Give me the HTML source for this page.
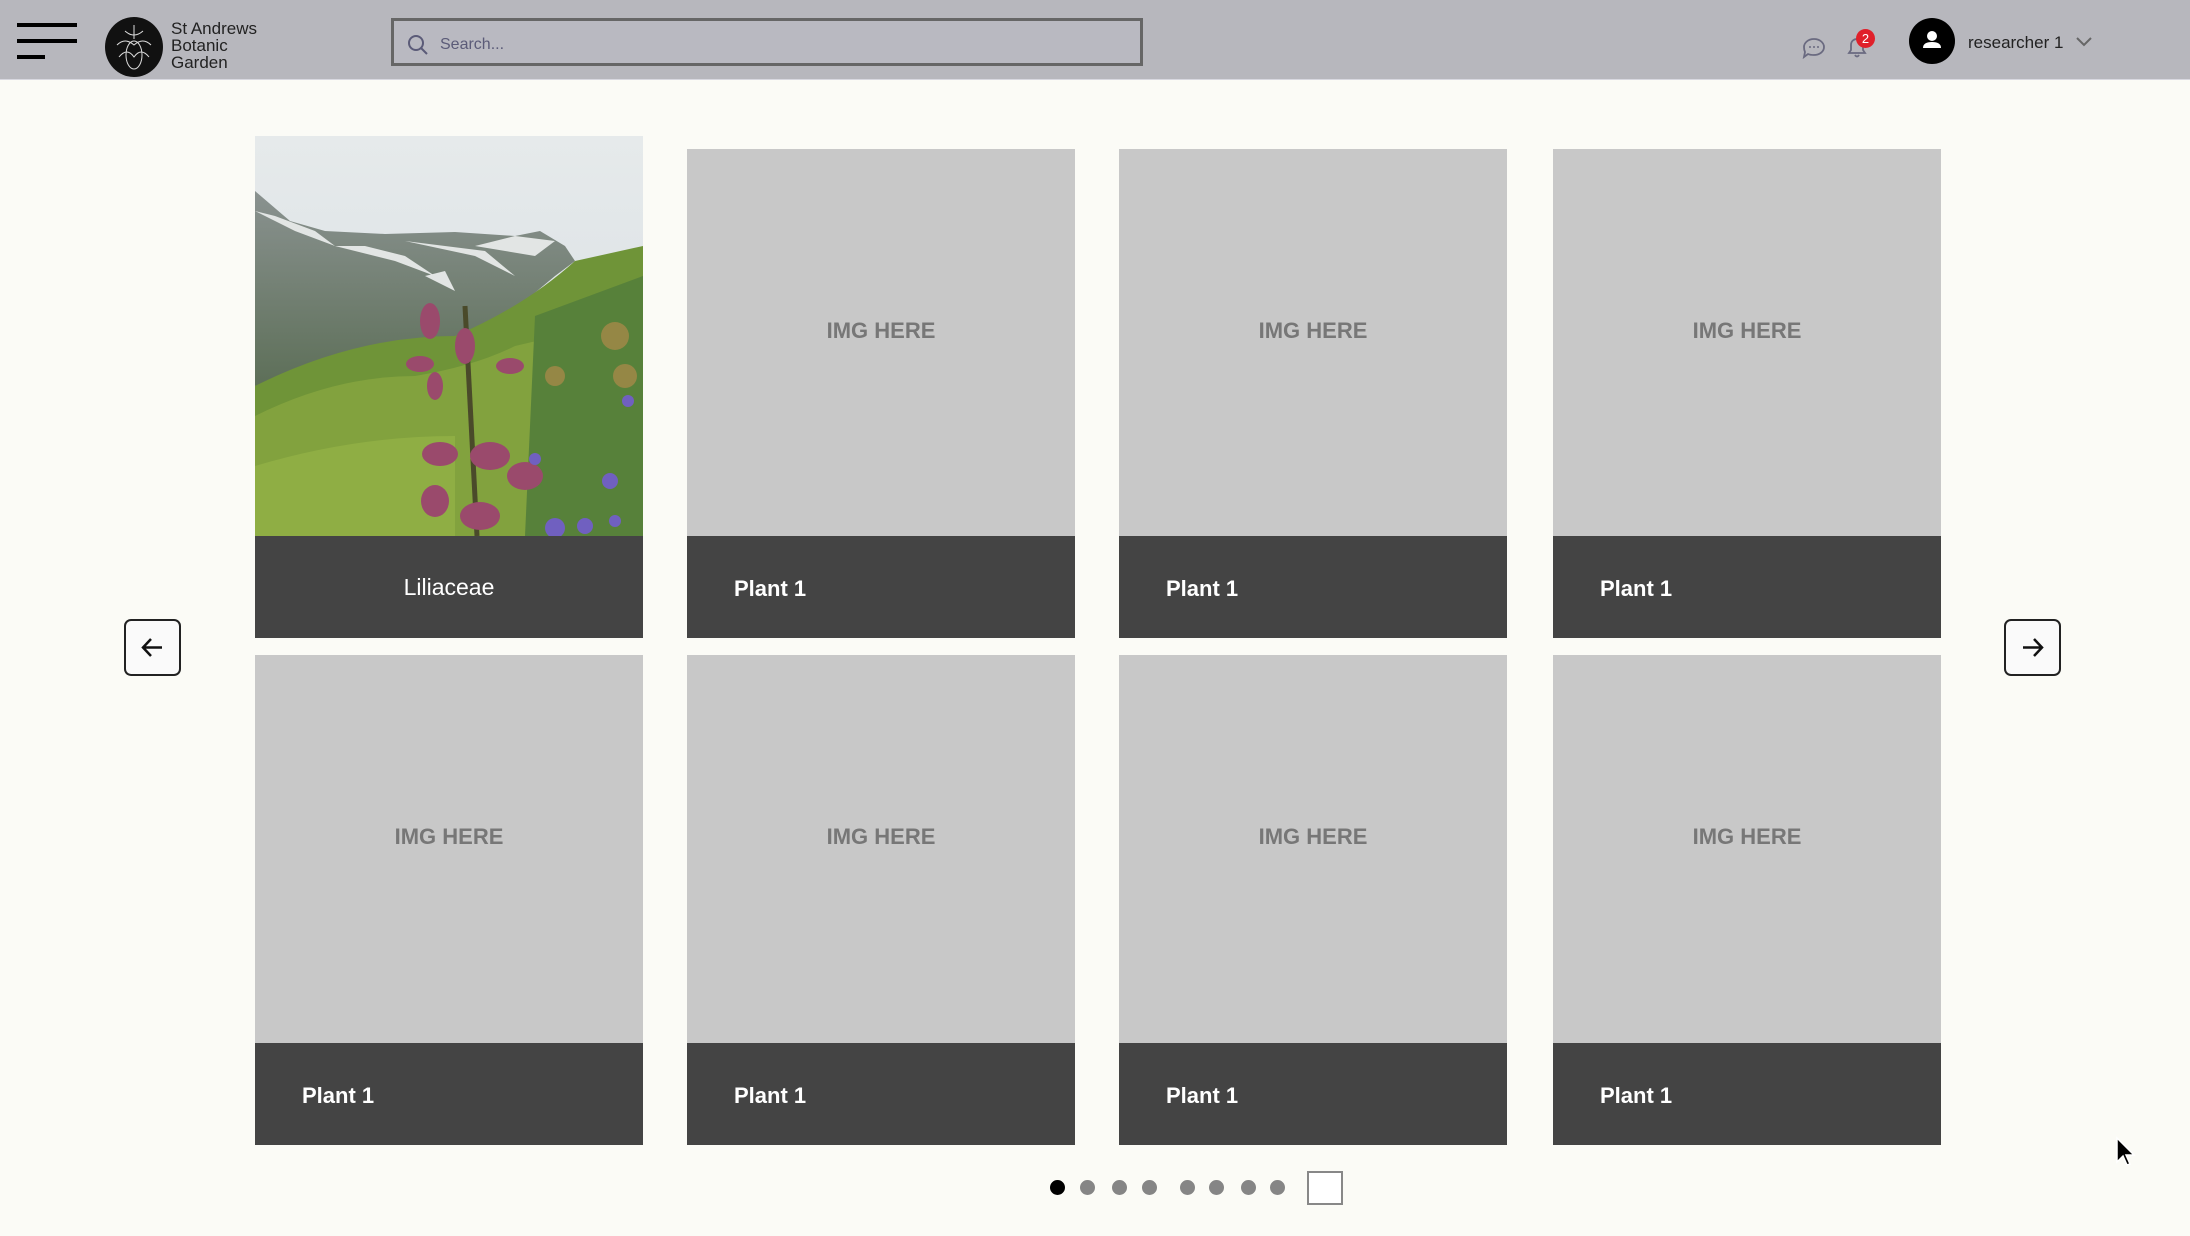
<!DOCTYPE html>
<html><head><meta charset="utf-8"><style>
*{margin:0;padding:0;box-sizing:border-box}
body{width:2190px;height:1236px;background:#fbfbf6;font-family:"Liberation Sans",sans-serif;position:relative;overflow:hidden}
.hdr{position:absolute;left:0;top:0;width:2190px;height:80px;background:#b7b7bd;border-bottom:1px solid #d8d8e0}
.ham{position:absolute;left:17px;height:4px;background:#000}
.logo{position:absolute;left:105px;top:17px;width:58px;height:60px;border-radius:50%;background:#111}
.ltxt{position:absolute;left:171px;top:20px;font-size:17px;line-height:17px;color:#222}
.search{position:absolute;left:391px;top:18px;width:752px;height:48px;border:3px solid #666;background:#b9b9c1}
.search span{position:absolute;left:46px;top:15px;font-size:16px;color:#5b5b78}
.card{position:absolute;width:388px;background:#c8c8c8}
.card .img{position:absolute;left:0;top:0;width:100%;text-align:center;font-weight:bold;font-size:22px;color:#777}
.bar{position:absolute;left:0;right:0;bottom:0;height:102px;background:#444}
.bar span{position:absolute;left:47px;top:40px;font-weight:bold;font-size:22px;color:#fff}
.arr{position:absolute;top:619px;width:57px;height:57px;border:2px solid #222;border-radius:7px;background:#fafafa}
.dot{position:absolute;top:1180px;width:15px;height:15px;border-radius:50%;background:#858585}
</style></head><body>
<div class="hdr">
<div class="ham" style="top:23px;width:60px"></div>
<div class="ham" style="top:39px;width:60px"></div>
<div class="ham" style="top:55px;width:28px"></div>
<div class="logo"><svg width="58" height="60" viewBox="0 0 58 60"><g fill="none" stroke="#ddd" stroke-width="1"><ellipse cx="29" cy="38" rx="8" ry="14"/><path d="M12 28 Q20 20 29 28 Q38 20 46 28 M14 40 Q22 30 29 40 Q36 30 44 40 M20 14 Q29 22 38 14 M29 8 L29 22"/></g></svg></div>
<div class="ltxt">St Andrews<br>Botanic<br>Garden</div>
<div class="search"><svg style="position:absolute;left:13px;top:13px" width="22" height="22" viewBox="0 0 22 22"><circle cx="9" cy="9" r="7" fill="none" stroke="#5b5b78" stroke-width="2"/><path d="M14 14 L20 20" stroke="#5b5b78" stroke-width="2"/></svg><span>Search...</span></div>
<svg style="position:absolute;left:1802px;top:37px" width="24" height="22" viewBox="0 0 24 22"><path d="M12 2 C18 2 22 6 22 10 C22 15 17 18 12 18 C10 18 8 18 6 17 L2 20 L3 15 C2 13 2 12 2 10 C2 6 6 2 12 2Z" fill="none" stroke="#6a6a80" stroke-width="1.8"/><circle cx="8" cy="10" r="1" fill="#6a6a80"/><circle cx="12" cy="10" r="1" fill="#6a6a80"/><circle cx="16" cy="10" r="1" fill="#6a6a80"/></svg>
<svg style="position:absolute;left:1845px;top:34px" width="24" height="26" viewBox="0 0 24 26"><path d="M4 19 L6 16 L6 11 C6 7 9 5 12 5 C15 5 18 7 18 11 L18 16 L20 19 Z M10 21 Q12 24 14 21" fill="none" stroke="#6a6a80" stroke-width="1.8"/></svg>
<div style="position:absolute;left:1856px;top:29px;width:19px;height:19px;border-radius:50%;background:#e0202a;color:#fff;font-size:13px;text-align:center;line-height:19px">2</div>
<div style="position:absolute;left:1909px;top:18px;width:46px;height:46px;border-radius:50%;background:#000"><svg width="46" height="46" viewBox="0 0 46 46"><circle cx="23" cy="18" r="5" fill="#fff"/><path d="M14 30 Q14 24 23 24 Q32 24 32 30 Z" fill="#fff"/></svg></div>
<div style="position:absolute;left:1968px;top:33px;font-size:17px;color:#222">researcher 1</div>
<svg style="position:absolute;left:2075px;top:36px" width="18" height="12" viewBox="0 0 18 12"><path d="M2 2 L9 9 L16 2" fill="none" stroke="#666" stroke-width="2"/></svg>
</div>

<div class="card" style="left:255px;top:136px;height:502px;background:#444">
<svg width="388" height="400" viewBox="0 0 388 400" style="position:absolute;left:0;top:0">
<defs><linearGradient id="sk" x1="0" y1="0" x2="0" y2="1"><stop offset="0" stop-color="#e6eaeb"/><stop offset="1" stop-color="#d4dce2"/></linearGradient>
<linearGradient id="mt" x1="0" y1="0" x2="0" y2="1"><stop offset="0" stop-color="#8a9290"/><stop offset="1" stop-color="#5d6f58"/></linearGradient></defs>
<rect width="388" height="400" fill="url(#sk)"/>
<path d="M0 55 L35 85 L70 95 L130 98 L200 96 L260 100 L285 95 L310 110 L320 125 L300 140 L270 165 L200 210 L0 250Z" fill="url(#mt)"/>
<g fill="#e2e5e4"><path d="M0 75 L40 95 L80 110 L60 95 L20 80Z"/><path d="M80 110 L140 125 L180 140 L150 120 L110 110Z"/><path d="M150 105 L220 120 L260 140 L230 115Z"/><path d="M220 110 L280 120 L300 105 L260 100Z"/><path d="M170 140 L200 155 L190 135Z"/></g>
<path d="M0 250 Q100 200 200 200 Q270 170 320 125 L388 110 L388 400 L0 400Z" fill="#6f9438"/>
<path d="M0 280 Q80 240 160 240 Q220 230 260 210 L388 180 L388 400 L0 400Z" fill="#82a23e"/>
<path d="M0 330 Q100 300 200 300 L200 400 L0 400Z" fill="#8fae44"/>
<path d="M280 180 L388 140 L388 400 L270 400Z" fill="#57813a"/>
<g fill="#b08a4a" opacity=".7"><circle cx="360" cy="200" r="14"/><circle cx="370" cy="240" r="12"/><circle cx="300" cy="240" r="10"/></g>
<path d="M210 170 L222 400" stroke="#4a4a2a" stroke-width="5"/>
<g fill="#9a4a6c"><ellipse cx="175" cy="185" rx="10" ry="18"/><ellipse cx="210" cy="210" rx="10" ry="18"/><ellipse cx="165" cy="228" rx="14" ry="8"/><ellipse cx="180" cy="250" rx="8" ry="14"/><ellipse cx="255" cy="230" rx="14" ry="8"/><ellipse cx="185" cy="318" rx="18" ry="12"/><ellipse cx="235" cy="320" rx="20" ry="14"/><ellipse cx="270" cy="340" rx="18" ry="14"/><ellipse cx="180" cy="365" rx="14" ry="16"/><ellipse cx="225" cy="380" rx="20" ry="14"/></g>
<g fill="#7060c0"><circle cx="355" cy="345" r="8"/><circle cx="300" cy="392" r="10"/><circle cx="330" cy="390" r="8"/><circle cx="360" cy="385" r="6"/><circle cx="280" cy="323" r="6"/><circle cx="373" cy="265" r="6"/></g>
</svg>
<div class="bar"><span style="left:0;right:0;text-align:center;font-weight:normal;font-size:23px;top:38px">Liliaceae</span></div>
</div>
<div class="card" style="left:687px;top:149px;height:489px"><div class="img" style="top:169px">IMG HERE</div><div class="bar"><span>Plant 1</span></div></div>
<div class="card" style="left:1119px;top:149px;height:489px"><div class="img" style="top:169px">IMG HERE</div><div class="bar"><span>Plant 1</span></div></div>
<div class="card" style="left:1553px;top:149px;height:489px"><div class="img" style="top:169px">IMG HERE</div><div class="bar"><span>Plant 1</span></div></div>
<div class="card" style="left:255px;top:655px;height:490px"><div class="img" style="top:169px">IMG HERE</div><div class="bar"><span>Plant 1</span></div></div>
<div class="card" style="left:687px;top:655px;height:490px"><div class="img" style="top:169px">IMG HERE</div><div class="bar"><span>Plant 1</span></div></div>
<div class="card" style="left:1119px;top:655px;height:490px"><div class="img" style="top:169px">IMG HERE</div><div class="bar"><span>Plant 1</span></div></div>
<div class="card" style="left:1553px;top:655px;height:490px"><div class="img" style="top:169px">IMG HERE</div><div class="bar"><span>Plant 1</span></div></div>

<div class="arr" style="left:124px"><svg width="53" height="53" viewBox="0 0 53 53"><path d="M36 26.5 L17 26.5 M25 18 L17 26.5 L25 35" fill="none" stroke="#111" stroke-width="2.5"/></svg></div>
<div class="arr" style="left:2004px"><svg width="53" height="53" viewBox="0 0 53 53"><path d="M17 26.5 L36 26.5 M28 18 L36 26.5 L28 35" fill="none" stroke="#111" stroke-width="2.5"/></svg></div>

<div class="dot" style="left:1050px;background:#000"></div>
<div class="dot" style="left:1080px"></div>
<div class="dot" style="left:1112px"></div>
<div class="dot" style="left:1142px"></div>
<div class="dot" style="left:1180px"></div>
<div class="dot" style="left:1209px"></div>
<div class="dot" style="left:1241px"></div>
<div class="dot" style="left:1270px"></div>
<div style="position:absolute;left:1307px;top:1171px;width:36px;height:34px;border:2px solid #888;background:#fff"></div>

<svg style="position:absolute;left:2115px;top:1136px" width="22" height="32" viewBox="0 0 22 32"><path d="M2 2 L2 26 L8 20 L12 29 L15 28 L11 19 L19 19 Z" fill="#000" stroke="#fff" stroke-width="1.5"/></svg>
</body></html>
